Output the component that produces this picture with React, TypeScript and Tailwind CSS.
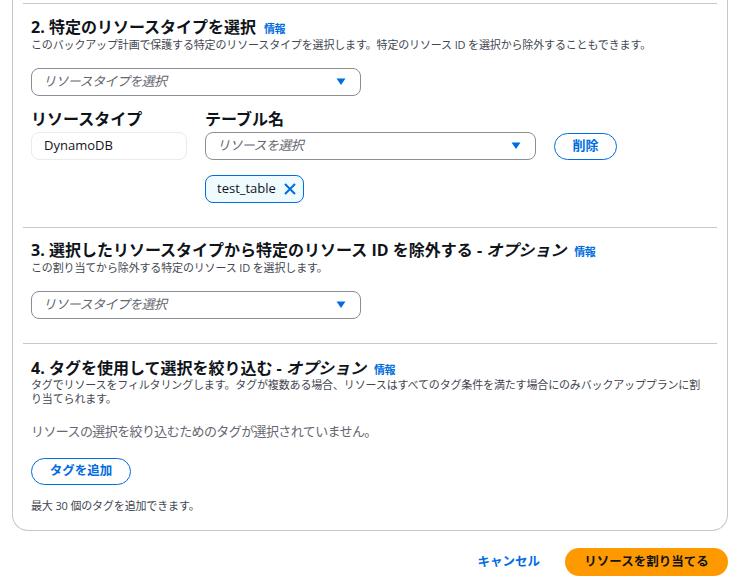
import React from 'react';

const font = { fontFamily: '"Open Sans", "Noto Sans CJK JP", sans-serif' };

const Caret = () => (
  <svg width="10" height="8" viewBox="0 0 10 8" className="shrink-0">
    <path d="M0.5 0.5 H9.5 L5 7 Z" fill="#006ce0" />
  </svg>
);

const Select = ({ placeholder, width }: { placeholder: string; width: string }) => (
  <div
    className={`${width} h-[28px] flex items-center justify-between pl-[11px] pr-[14px] border border-[#8c8c94] rounded-[8px] bg-white`}
  >
    <span className="text-[13px] tracking-[-0.6px] italic text-[#656871]">{placeholder}</span>
    <Caret />
  </div>
);

const Info = () => (
  <span className="ml-[8px] text-[11px] leading-none tracking-[-0.5px] font-bold text-[#006ce0]">情報</span>
);

const Heading = ({ num, text, optional }: { num: string; text: string; optional?: boolean }) => (
  <h2 className="h-[20px] text-[16px] leading-[20px] font-bold text-[#0f141a] whitespace-nowrap">
    {num} {text}
    {optional && (
      <>
        {' '}- <i>オプション</i>
      </>
    )}
    <Info />
  </h2>
);

const Desc = ({ children, className = '' }: { children: React.ReactNode; className?: string }) => (
  <p className={`text-[11px] tracking-[-0.15px] text-[#424650] ${className}`}>{children}</p>
);

const Divider = () => <div className="mx-[10px] h-px bg-[#c6c6cd]" />;

export default function App() {
  return (
    <div className="min-h-screen bg-white" style={font}>
      <div className="ml-[12px] w-[716px] border-x border-b border-[#c6c6cd] rounded-b-[16px] pt-[3px]">
        <Divider />

        {/* Section 2 */}
        <section className="px-[18px] pt-[13px] pb-[24px]">
          <Heading num="2." text="特定のリソースタイプを選択" />
          <Desc className="leading-[16px]">
            このバックアップ計画で保護する特定のリソースタイプを選択します。特定のリソース ID を選択から除外することもできます。
          </Desc>
          <div className="mt-[15px]">
            <Select placeholder="リソースタイプを選択" width="w-[330px]" />
          </div>
          <div className="mt-[13px] flex gap-[18px]">
            <div className="w-[156px]">
              <div className="text-[16px] leading-[20px] font-bold text-[#0f141a]">リソースタイプ</div>
              <div className="mt-[3px] h-[28px] flex items-center px-[12px] border border-[#e9ebed] rounded-[8px] text-[13px] text-[#0f141a]">
                DynamoDB
              </div>
            </div>
            <div>
              <div className="text-[16px] leading-[20px] font-bold text-[#0f141a]">テーブル名</div>
              <div className="mt-[3px] flex items-center gap-[18px]">
                <Select placeholder="リソースを選択" width="w-[331px]" />
                <button className="h-[27px] w-[63px] rounded-full border border-[#006ce0] text-[13px] font-bold text-[#006ce0]">
                  削除
                </button>
              </div>
              <div className="mt-[15px] inline-flex items-center gap-[8px] h-[28px] pl-[11px] pr-[7px] border border-[#006ce0] rounded-[8px] bg-[#f0fbff]">
                <span className="text-[13px] text-[#0f141a]">test_table</span>
                <svg width="12" height="12" viewBox="0 0 12 12">
                  <path d="M1 1 L11 11 M11 1 L1 11" stroke="#006ce0" strokeWidth="2" />
                </svg>
              </div>
            </div>
          </div>
        </section>

        <Divider />

        {/* Section 3 */}
        <section className="px-[18px] pt-[12px] pb-[24px]">
          <Heading num="3." text="選択したリソースタイプから特定のリソース ID を除外する" optional />
          <Desc className="leading-[16px]">この割り当てから除外する特定のリソース ID を選択します。</Desc>
          <div className="mt-[15px]">
            <Select placeholder="リソースタイプを選択" width="w-[330px]" />
          </div>
        </section>

        <Divider />

        {/* Section 4 */}
        <section className="px-[18px] pt-[14px] pb-[16px]">
          <Heading num="4." text="タグを使用して選択を絞り込む" optional />
          <Desc className="leading-[14px]">
            タグでリソースをフィルタリングします。タグが複数ある場合、リソースはすべてのタグ条件を満たす場合にのみバックアッププランに割り当てられます。
          </Desc>
          <p className="mt-[15px] text-[13px] tracking-[-0.6px] leading-[20px] text-[#656871]">
            リソースの選択を絞り込むためのタグが選択されていません。
          </p>
          <button className="mt-[17px] h-[27px] w-[100px] rounded-full border border-[#006ce0] text-[12.5px] font-bold text-[#006ce0]">
            タグを追加
          </button>
          <Desc className="mt-[13px] leading-[16px]">最大 30 個のタグを追加できます。</Desc>
        </section>
      </div>

      {/* Footer */}
      <div className="w-[728px] flex justify-end items-center gap-[25px] mt-[17px]">
        <button className="text-[12.5px] font-bold text-[#006ce0]">キャンセル</button>
        <button className="h-[28px] w-[163px] rounded-full bg-[#ff9900] text-[12.5px] font-bold text-[#0f141a]">
          リソースを割り当てる
        </button>
      </div>
    </div>
  );
}
